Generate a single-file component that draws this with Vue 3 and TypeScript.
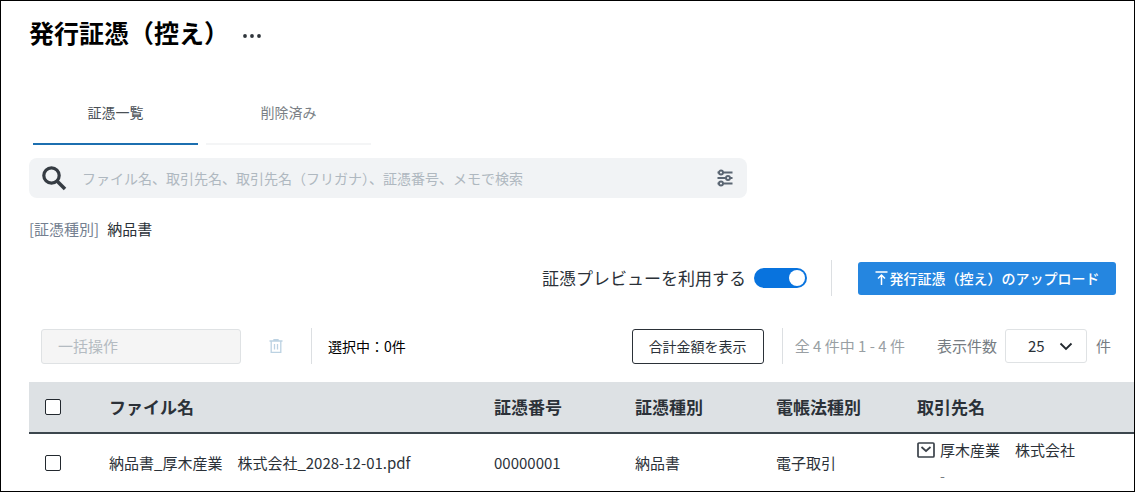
<script setup lang="ts">
import { ref } from 'vue'

interface Voucher {
  file: string
  number: string
  kind: string
  lawKind: string
  client: string
}

const tabs: string[] = ['証憑一覧', '削除済み']
const activeTab = ref<number>(0)
const keyword = ref<string>('')
const preview = ref<boolean>(true)
const perPage = ref<string>('25')
const headings: string[] = ['ファイル名', '証憑番号', '証憑種別', '電帳法種別', '取引先名']
const rows: Voucher[] = [
  {
    file: '納品書_厚木産業　株式会社_2028-12-01.pdf',
    number: '00000001',
    kind: '納品書',
    lawKind: '電子取引',
    client: '厚木産業　株式会社',
  },
]
</script>

<template>
  <main class="page">
    <header class="title-row">
      <h1>発行証憑（控え）</h1>
      <button class="icon-button more" type="button" aria-label="メニュー">
        <svg width="20" height="6" viewBox="0 0 20 6" fill="#2f353b">
          <circle cx="3" cy="3" r="1.9" /><circle cx="10" cy="3" r="1.9" /><circle cx="17" cy="3" r="1.9" />
        </svg>
      </button>
    </header>

    <nav class="tabs">
      <button
        v-for="(tab, i) in tabs"
        :key="tab"
        type="button"
        class="tab"
        :class="{ active: i === activeTab }"
        @click="activeTab = i"
      >{{ tab }}</button>
    </nav>

    <div class="search">
      <svg width="26" height="26" viewBox="0 0 26 26" fill="none" stroke="#363c43">
        <circle cx="10.5" cy="10.5" r="7.7" stroke-width="3.2" />
        <path d="M16 16l8 8" stroke-width="3.6" />
      </svg>
      <input
        v-model="keyword"
        type="text"
        aria-label="検索"
        placeholder="ファイル名、取引先名、取引先名（フリガナ）、証憑番号、メモで検索"
      />
      <button class="icon-button" type="button" aria-label="絞り込み">
        <svg width="16" height="18" viewBox="0 0 16 18" fill="none" stroke="#5b6673" stroke-width="1.9">
          <path d="M0.5 3.5h1.5M6 3.5h9.5M0.5 9h8.5M13 9h2.5M0.5 14.5h1.5M6 14.5h9.5" />
          <circle cx="4" cy="3.5" r="2" /><circle cx="11" cy="9" r="2" /><circle cx="4" cy="14.5" r="2" />
        </svg>
      </button>
    </div>

    <p class="filter"><span>[証憑種別]</span><strong>納品書</strong></p>

    <div class="actions">
      <label class="preview">
        証憑プレビューを利用する
        <input v-model="preview" class="toggle" type="checkbox" role="switch" />
      </label>
      <i class="divider"></i>
      <button class="upload" type="button">
        <svg width="13" height="14" viewBox="0 0 13 14" fill="none" stroke="#fff" stroke-width="1.5">
          <path d="M0.5 1h12M6.500 14V4M3 7.500L6.500 4l3.500 3.500" />
        </svg>
        発行証憑（控え）のアップロード
      </button>
    </div>

    <div class="toolbar">
      <select class="bulk" disabled aria-label="一括操作">
        <option>一括操作</option>
      </select>
      <button class="icon-button trash" type="button" disabled aria-label="削除">
        <svg width="14" height="14" viewBox="0 0 14 14" fill="none" stroke="#bcd2e2" stroke-width="1.3">
          <path d="M0.5 2h13M5 2V0.5h4V2M2.2 2v11.3h9.6V2M5.5 5v5.5M8.5 5v5.5" />
        </svg>
      </button>
      <i class="divider"></i>
      <span class="selected">選択中：0件</span>
      <button class="total" type="button">合計金額を表示</button>
      <i class="divider"></i>
      <span class="range">全 4 件中 1 - 4 件</span>
      <label class="per-label" for="per-page">表示件数</label>
      <span class="per-page">
        <select id="per-page" v-model="perPage">
          <option>25</option>
          <option>50</option>
          <option>100</option>
        </select>
        <svg class="chevron" width="14" height="9" viewBox="0 0 14 9" fill="none" stroke="#22282e" stroke-width="1.8">
          <path d="M1.5 1.5L7 7l5.5-5.5" />
        </svg>
      </span>
      <span class="unit">件</span>
    </div>

    <table>
      <colgroup>
        <col class="c-check" /><col /><col class="c-mid" /><col class="c-mid" /><col class="c-mid" /><col class="c-client" />
      </colgroup>
      <thead>
        <tr>
          <th class="check"><input type="checkbox" aria-label="すべて選択" /></th>
          <th v-for="heading in headings" :key="heading" scope="col">{{ heading }}</th>
        </tr>
      </thead>
      <tbody>
        <tr v-for="row in rows" :key="row.number">
          <td class="check"><input type="checkbox" :aria-label="row.file" /></td>
          <td>{{ row.file }}</td>
          <td>{{ row.number }}</td>
          <td>{{ row.kind }}</td>
          <td>{{ row.lawKind }}</td>
          <td>
            <div class="client">
              <svg width="18" height="16" viewBox="0 0 18 16" fill="none" stroke="#3a4149" stroke-width="1.7">
                <rect x="1" y="1" width="16" height="14" rx="1" />
                <path d="M4.5 5L9 9l4.5-4" />
              </svg>
              <span>{{ row.client }}</span>
              <small>-</small>
            </div>
          </td>
        </tr>
      </tbody>
    </table>
  </main>
</template>

<style>
body {
  margin: 0;
  background: #fff;
}
</style>

<style scoped>
.page {
  box-sizing: border-box;
  min-height: 100vh;
  padding: 14px 0 0 28px;
  border: 1px solid #000;
  font-family: "Noto Sans CJK JP", sans-serif;
  font-size: 15px;
  line-height: 20px;
  color: #2b3138;
}
button,
input,
select {
  font: inherit;
  color: inherit;
}
.icon-button {
  display: flex;
  padding: 0;
  border: 0;
  background: none;
}
.title-row {
  display: flex;
  align-items: center;
  gap: 13px;
}
.more {
  padding-top: 8px;
}
h1 {
  margin: 0;
  font-size: 25px;
  line-height: 34px;
  font-weight: 700;
  color: #000;
}
.tabs {
  display: flex;
  gap: 8px;
  margin: 32px 0 0 4px;
}
.tab {
  width: 165px;
  height: 64px;
  padding: 0;
  border: 0;
  border-bottom: 2px solid #f4f5f6;
  background: none;
  font-size: 14px;
  color: #7a7f85;
}
.tab.active {
  border-color: #1c6fb0;
  color: #4a5056;
}
.search {
  display: flex;
  align-items: center;
  box-sizing: border-box;
  width: 65%;
  height: 40px;
  margin-top: 13px;
  padding: 0 14px 0 12px;
  border-radius: 8px;
  background: #f1f3f5;
}
.search input {
  flex: 1;
  min-width: 0;
  padding: 0 15px;
  border: 0;
  outline: 0;
  background: none;
  font-size: 14px;
}
.search input::placeholder {
  color: #afb8c0;
  opacity: 1;
}
.filter {
  display: flex;
  gap: 8px;
  margin: 21px 0 0;
}
.filter span {
  color: #748090;
}
.filter strong {
  font-weight: 400;
}
.actions {
  display: flex;
  align-items: center;
  justify-content: flex-end;
  margin-top: 21px;
  padding-right: 18px;
}
.divider {
  width: 1px;
  height: 36px;
  background: #dcdfe2;
}
.preview {
  display: flex;
  align-items: center;
  gap: 8px;
  margin-right: 24px;
  font-size: 17px;
}
.toggle {
  display: flex;
  align-items: center;
  justify-content: flex-end;
  appearance: none;
  width: 53px;
  height: 20px;
  margin: 0;
  padding: 0 2px;
  border-radius: 10px;
  background: #0873de;
}
.toggle::before {
  content: "";
  width: 16px;
  height: 16px;
  border-radius: 50%;
  background: #fff;
}
.toggle:not(:checked) {
  justify-content: flex-start;
  background: #aab2ba;
}
.upload {
  display: flex;
  align-items: center;
  justify-content: center;
  gap: 2px;
  width: 258px;
  height: 33px;
  margin-left: 26px;
  padding: 0;
  border: 0;
  border-radius: 3px;
  background: #2586e0;
  font-size: 14px;
  font-weight: 500;
  color: #fff;
}
.toolbar {
  display: flex;
  align-items: center;
  margin-top: 32px;
  padding: 0 23px 0 12px;
}
.bulk {
  appearance: none;
  width: 200px;
  height: 35px;
  padding: 0 16px;
  border: 1px solid #dfe2e4;
  border-radius: 3px;
  background: #f5f5f5;
  color: #b4bbc1;
  opacity: 1;
}
.trash {
  margin: 0 28px;
}
.selected {
  margin: 0 auto 0 16px;
  font-size: 14px;
  color: #000;
}
.total {
  width: 132px;
  height: 35px;
  margin-right: 18px;
  padding: 0;
  border: 1px solid #2b3138;
  border-radius: 3px;
  background: #fff;
  font-size: 14px;
}
.range {
  margin-left: 12px;
  color: #999fa4;
}
.per-label {
  margin: 0 8px 0 32px;
  color: #767c82;
}
.per-page {
  display: grid;
  align-items: center;
}
.per-page select {
  grid-area: 1 / 1;
  appearance: none;
  width: 82px;
  height: 34px;
  padding: 0 22px;
  border: 1px solid #dfe2e4;
  border-radius: 3px;
  background: #fff;
}
.chevron {
  grid-area: 1 / 1;
  justify-self: end;
  margin-right: 14px;
  pointer-events: none;
}
.unit {
  margin-left: 9px;
  color: #767c82;
}
table {
  width: 100%;
  margin-top: 18px;
  border-collapse: separate;
  border-spacing: 0;
  table-layout: fixed;
}
.c-check {
  width: 80px;
}
.c-mid {
  width: 141px;
}
.c-client {
  width: 217px;
}
th,
td {
  padding: 0;
  text-align: left;
}
th {
  height: 50px;
  border-bottom: 2px solid #3c464e;
  background: #dde1e4;
  font-size: 17px;
  font-weight: 700;
}
td {
  height: 57px;
}
.check input {
  display: block;
  box-sizing: border-box;
  appearance: none;
  width: 16px;
  height: 16px;
  margin: 0 0 0 16px;
  border: 1px solid #22282e;
  border-radius: 2px;
  background: #fff;
}
.check input:checked {
  background: #0873de;
}
.client {
  display: grid;
  grid-template-columns: 18px 1fr;
  column-gap: 5px;
  row-gap: 5px;
  align-items: center;
}
.client small {
  grid-column: 2;
  font-size: 14px;
  color: #777d83;
}
</style>
